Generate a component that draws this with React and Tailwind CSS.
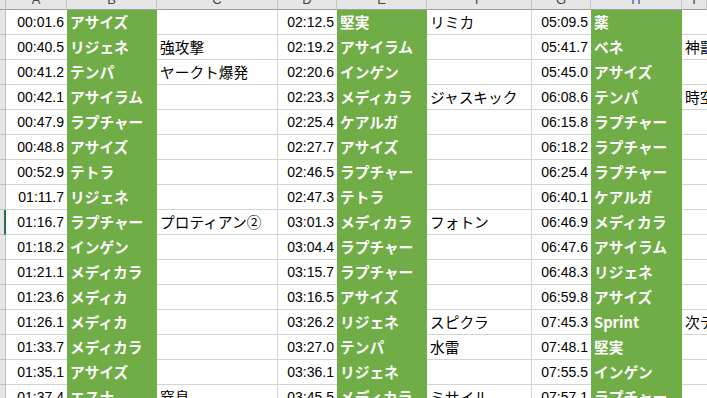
const cols = "grid grid-cols-[6px_61px_90px_121px_59px_90px_105px_59px_91px_1fr]";

const letters = ["A", "B", "C", "D", "E", "F", "G", "H", "I"];

const rows = [
  ["00:01.6", "アサイズ", "", "02:12.5", "堅実", "リミカ", "05:09.5", "薬", ""],
  ["00:40.5", "リジェネ", "強攻撃", "02:19.2", "アサイラム", "", "05:41.7", "ベネ", "神罰"],
  ["00:41.2", "テンパ", "ヤークト爆発", "02:20.6", "インゲン", "", "05:45.0", "アサイズ", ""],
  ["00:42.1", "アサイラム", "", "02:23.3", "メディカラ", "ジャスキック", "06:08.6", "テンパ", "時空"],
  ["00:47.9", "ラプチャー", "", "02:25.4", "ケアルガ", "", "06:15.8", "ラプチャー", ""],
  ["00:48.8", "アサイズ", "", "02:27.7", "アサイズ", "", "06:18.2", "ラプチャー", ""],
  ["00:52.9", "テトラ", "", "02:46.5", "ラプチャー", "", "06:25.4", "ラプチャー", ""],
  ["01:11.7", "リジェネ", "", "02:47.3", "テトラ", "", "06:40.1", "ケアルガ", ""],
  ["01:16.7", "ラプチャー", "プロティアン②", "03:01.3", "メディカラ", "フォトン", "06:46.9", "メディカラ", ""],
  ["01:18.2", "インゲン", "", "03:04.4", "ラプチャー", "", "06:47.6", "アサイラム", ""],
  ["01:21.1", "メディカラ", "", "03:15.7", "ラプチャー", "", "06:48.3", "リジェネ", ""],
  ["01:23.6", "メディカ", "", "03:16.5", "アサイズ", "", "06:59.8", "アサイズ", ""],
  ["01:26.1", "メディカ", "", "03:26.2", "リジェネ", "スピクラ", "07:45.3", "Sprint", "次テ"],
  ["01:33.7", "メディカラ", "", "03:27.0", "テンパ", "水雷", "07:48.1", "堅実", ""],
  ["01:35.1", "アサイズ", "", "03:36.1", "リジェネ", "", "07:55.5", "インゲン", ""],
  ["01:37.4", "エスナ", "窒息", "03:45.5", "メディカラ", "ミサイル", "07:57.1", "ラプチャー", ""],
];

const Time = ({ v }) => (
  <div className="flex items-center justify-end pr-[3px] border-b border-[#d4d4d4] [font-family:'Liberation_Sans',sans-serif] text-[14px] text-black">
    {v}
  </div>
);

const Green = ({ v }) => (
  <div className="flex items-center pl-[3px] bg-[#70ad47] text-white font-bold text-[14.7px] whitespace-nowrap overflow-hidden">
    {v}
  </div>
);

const Text = ({ v, edge }) => (
  <div
    className={`flex items-center pl-[3px] border-b border-[#d4d4d4] text-[14.7px] text-black whitespace-nowrap overflow-hidden ${
      edge ? "border-r" : ""
    }`}
  >
    {v}
  </div>
);

export default function App() {
  return (
    <div className="h-screen w-full overflow-hidden bg-white [font-family:'Noto_Sans_CJK_JP',sans-serif]">
      {/* column headers, mostly scrolled out of view */}
      <div className={`${cols} h-[10px]`}>
        <div className="bg-[#e6e6e6] border-r border-b border-r-[#bfbfbf] border-b-[#9e9e9e]" />
        {letters.map((l) => (
          <div
            key={l}
            className="h-[10px] overflow-hidden bg-[#e6e6e6] border-r border-b border-r-[#c6c6c6] border-b-[#9e9e9e]"
          >
            <div
              className={`-mt-[9px] h-[18px] flex items-center justify-center [font-family:'Liberation_Sans',sans-serif] text-[13px] ${
                l === "H" ? "text-[#2f5d8a]" : "text-[#444]"
              }`}
            >
              {l}
            </div>
          </div>
        ))}
      </div>

      {rows.map((r, i) => (
        <div key={i} className={`${cols} h-[25px]`}>
          <div
            className={`bg-[#e6e6e6] border-b border-b-[#bfbfbf] ${
              i === 8 ? "border-r-2 border-r-[#217346]" : "border-r border-r-[#bfbfbf]"
            }`}
          />
          <Time v={r[0]} />
          <Green v={r[1]} />
          <Text v={r[2]} edge />
          <Time v={r[3]} />
          <Green v={r[4]} />
          <Text v={r[5]} edge />
          <Time v={r[6]} />
          <Green v={r[7]} />
          <Text v={r[8]} />
        </div>
      ))}
    </div>
  );
}
